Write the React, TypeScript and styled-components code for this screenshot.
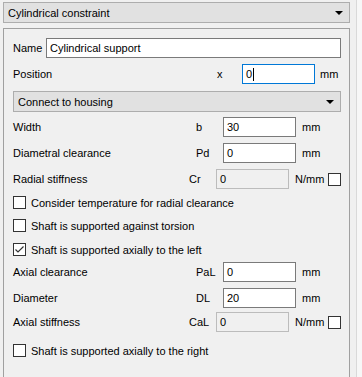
import styled, {createGlobalStyle} from "styled-components";

const GlobalStyle = createGlobalStyle`
    html, body {
        margin: 0;
        padding: 0;
        background: #f0f0f0;
    }
    body {
        font-family: "Liberation Sans", Arial, sans-serif;
        font-size: 11px;
        color: #000;
    }
`

const Page = styled.div`
    display: flex;
    width: 362px;
    height: 377px;
    overflow: hidden;
`

const MainColumn = styled.div`
    width: 347px;
    padding: 2px 0 0 3px;
    display: flex;
    flex-direction: column;
`

const SideStrip = styled.div`
    margin-left: 6px;
    flex: 1;
    border-left: 1px solid #d9d9d9;
    background: #f7f7f7;
`

const Combo = styled.div<{ $mt?: number }>`
    height: 19px;
    margin-top: ${({$mt}) => $mt ?? 0}px;
    display: flex;
    align-items: center;
    justify-content: space-between;
    padding: 0 6px 0 4px;
    background: #e1e1e1;
    border: 1px solid #adadad;
`

const Arrow = styled.span`
    width: 0;
    height: 0;
    border-left: 4px solid transparent;
    border-right: 4px solid transparent;
    border-top: 4px solid #000;
`

const GroupBox = styled.div`
    margin-top: 5px;
    flex: 1;
    border: 1px solid #a0a0a0;
    border-bottom: none;
    padding: 9px 8px 0 9px;
    display: flex;
    flex-direction: column;
`

const Row = styled.div<{ $mt?: number; $h?: number }>`
    display: flex;
    align-items: center;
    height: ${({$h}) => $h ?? 20}px;
    margin-top: ${({$mt}) => $mt ?? 0}px;
`

const Label = styled.span<{ $w?: number }>`
    flex: ${({$w}) => $w ? "none" : 1};
    width: ${({$w}) => $w ? `${$w}px` : "auto"};
    white-space: nowrap;
`

const Symbol = styled.span<{ $w?: number }>`
    width: ${({$w}) => $w ?? 27}px;
`

const Field = styled.div<{ $w?: number; $disabled?: boolean; $focused?: boolean }>`
    box-sizing: border-box;
    width: ${({$w}) => $w ?? 73}px;
    height: 100%;
    display: flex;
    align-items: center;
    padding-left: 3px;
    background: ${({$disabled}) => $disabled ? "#f0f0f0" : "#fff"};
    border: 1px solid ${({$disabled, $focused}) => $focused ? "#0078d7" : $disabled ? "#bcbcbc" : "#7a7a7a"};
`

const Caret = styled.span`
    display: inline-block;
    width: 1px;
    height: 13px;
    margin-left: 1px;
    background: #000;
`

const Unit = styled.span<{ $w?: number; $pl?: number }>`
    width: ${({$w}) => $w ?? 45}px;
    padding-left: ${({$pl}) => $pl ?? 6}px;
    box-sizing: border-box;
    display: flex;
    align-items: center;
    justify-content: space-between;
`

const Box = styled.span`
    box-sizing: border-box;
    width: 13px;
    height: 13px;
    border: 1px solid #333;
    background: #fff;
    display: inline-flex;
    align-items: center;
    justify-content: center;
    flex-shrink: 0;
`

const CheckText = styled.span`
    margin-left: 5px;
    white-space: nowrap;
`

const CheckBox = ({checked}: { checked?: boolean }) => (
    <Box>
        {checked && (
            <svg width="11" height="11" viewBox="0 0 11 11">
                <path d="M1.5 5.5 L4 8 L9.5 2.5" fill="none" stroke="#333" strokeWidth="1.2"/>
            </svg>
        )}
    </Box>
);

const CheckRow = ({text, checked, mt}: { text: string; checked?: boolean; mt: number }) => (
    <Row $mt={mt} $h={17}>
        <CheckBox checked={checked}/>
        <CheckText>{text}</CheckText>
    </Row>
);

const ValueRow = ({label, symbol, value, mt}: { label: string; symbol: string; value: string; mt: number }) => (
    <Row $mt={mt}>
        <Label>{label}</Label>
        <Symbol>{symbol}</Symbol>
        <Field>{value}</Field>
        <Unit>mm</Unit>
    </Row>
);

const StiffnessRow = ({label, symbol, mt}: { label: string; symbol: string; mt: number }) => (
    <Row $mt={mt}>
        <Label>{label}</Label>
        <Symbol>{symbol}</Symbol>
        <Field $disabled>0</Field>
        <Unit $w={52}>N/mm<CheckBox/></Unit>
    </Row>
);

export default function App() {
    return (
        <Page>
            <GlobalStyle/>
            <MainColumn>
                <Combo>Cylindrical constraint<Arrow/></Combo>
                <GroupBox>
                    <Row>
                        <Label $w={33}>Name</Label>
                        <Field $w={296}>Cylindrical support</Field>
                    </Row>
                    <Row $mt={6}>
                        <Label>Position</Label>
                        <Symbol $w={25}>x</Symbol>
                        <Field $focused>0<Caret/></Field>
                        <Unit $w={26} $pl={5}>mm</Unit>
                    </Row>
                    <Combo $mt={7}>Connect to housing<Arrow/></Combo>
                    <ValueRow label="Width" symbol="b" value="30" mt={5}/>
                    <ValueRow label="Diametral clearance" symbol="Pd" value="0" mt={6}/>
                    <StiffnessRow label="Radial stiffness" symbol="Cr" mt={6}/>
                    <CheckRow text="Consider temperature for radial clearance" mt={5}/>
                    <CheckRow text="Shaft is supported against torsion" mt={6}/>
                    <CheckRow text="Shaft is supported axially to the left" checked mt={7}/>
                    <ValueRow label="Axial clearance" symbol="PaL" value="0" mt={4}/>
                    <ValueRow label="Diameter" symbol="DL" value="20" mt={6}/>
                    <StiffnessRow label="Axial stiffness" symbol="CaL" mt={4}/>
                    <CheckRow text="Shaft is supported axially to the right" mt={10}/>
                </GroupBox>
            </MainColumn>
            <SideStrip/>
        </Page>
    );
}
